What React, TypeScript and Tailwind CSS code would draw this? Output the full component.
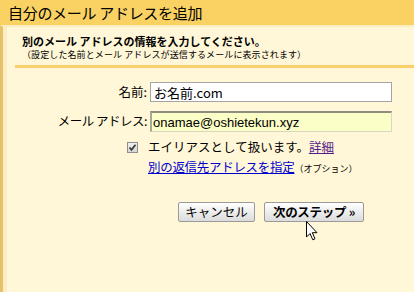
const jp = "font-['Noto_Sans_CJK_JP','Liberation_Sans',sans-serif]";

const Cursor = () => (
  <svg
    className="absolute left-[306px] top-[221px]"
    width="13"
    height="20"
    viewBox="0 0 13 20"
  >
    <path
      d="M0.5 0.5 L0.5 16 L4 12.5 L6.8 18.8 L9 17.8 L6.3 11.7 L11 11.7 Z"
      fill="#fff"
      stroke="#000"
      strokeWidth="1"
      strokeLinejoin="miter"
    />
  </svg>
);

export default function App() {
  return (
    <div className={`relative w-[414px] h-[292px] overflow-hidden bg-[#fff7d7] text-black flex flex-col ${jp}`}>
      {/* タイトル */}
      <div className="h-[25px] bg-[#fad163] pl-[8px] text-[15px] leading-[25px] tracking-[-0.3px] whitespace-nowrap">
        自分のメール アドレスを追加
      </div>

      <div className="flex-1 flex flex-col border-l-[3px] border-[#e6c26c] border-t-2 border-t-[#fdeec2]">
        <div className="flex-1 flex flex-col border-l-[4px] border-[#fdeec2]">
          {/* 説明 */}
          <div className="pl-[15px] pt-[7px] h-[38px]">
            <div className="text-[11px] leading-[14px] font-bold whitespace-nowrap">
              別のメール アドレスの情報を入力してください。
            </div>
            <div className="text-[9px] leading-[11px] mt-[1px] tracking-[0.1px] whitespace-nowrap">
              （設定した名前とメール アドレスが送信するメールに表示されます）
            </div>
          </div>
          <div className="ml-[8px] h-[3px] bg-[#f9cf6c]" />

          {/* フォーム */}
          <div className="grid grid-cols-[140px_242px] gap-x-[3px] items-center pt-[14px] text-[12.5px]">
            <div className="text-right">名前:</div>
            <input
              defaultValue="お名前.com"
              className="h-[20px] border border-[#a5a5a5] bg-white px-[3px] text-[13px] outline-none font-['Noto_Sans_CJK_JP','Liberation_Sans',sans-serif]"
            />

            <div className="text-right mt-[9px] tracking-[-0.5px]">メール アドレス:</div>
            <input
              defaultValue="onamae@oshietekun.xyz"
              className="mt-[9px] h-[21px] border border-[#d8d8c0] border-t-2 border-l-2 border-t-[#8e8e80] border-l-[#a8a898] bg-[#fbfec6] px-[1px] text-[13px] outline-none font-['Liberation_Sans',sans-serif]"
            />

            <div className="flex justify-end pr-[9px] mt-[8px]">
              <span className="w-[11px] h-[11px] border border-[#8f8f8f] bg-gradient-to-b from-[#f0f0f0] to-[#d6d6d6] flex items-center justify-center">
                <svg width="9" height="9" viewBox="0 0 9 9">
                  <path d="M1.5 4.5 L3.5 6.8 L7.5 1.8" fill="none" stroke="#3a3a3a" strokeWidth="1.8" />
                </svg>
              </span>
            </div>
            <div className="mt-[8px] -ml-[2px] text-[12.5px] leading-[14px] whitespace-nowrap">
              エイリアスとして扱います。
              <a href="#" className="text-[#551a8b] underline">詳細</a>
            </div>

            <div />
            <div className="mt-[6px] -ml-[2px] leading-[14px] whitespace-nowrap">
              <a href="#" className="text-[#0000cc] underline tracking-[-0.3px]">別の返信先アドレスを指定</a>
              <span className="text-[9px]">（オプション）</span>
            </div>
          </div>

          {/* ボタン */}
          <div className="flex gap-[9px] pl-[171px] pt-[26px]">
            <button className="w-[77px] h-[20px] border border-[#9a9a9a] rounded-[2px] bg-gradient-to-b from-white to-[#dcdcdc] text-[12.5px] leading-[18px]">
              キャンセル
            </button>
            <button className="w-[100px] h-[20px] border border-[#9a9a9a] rounded-[2px] bg-gradient-to-b from-white to-[#dcdcdc] text-[12.5px] leading-[18px] font-bold tracking-[-0.3px]">
              次のステップ »
            </button>
          </div>
        </div>
      </div>

      <Cursor />
    </div>
  );
}
